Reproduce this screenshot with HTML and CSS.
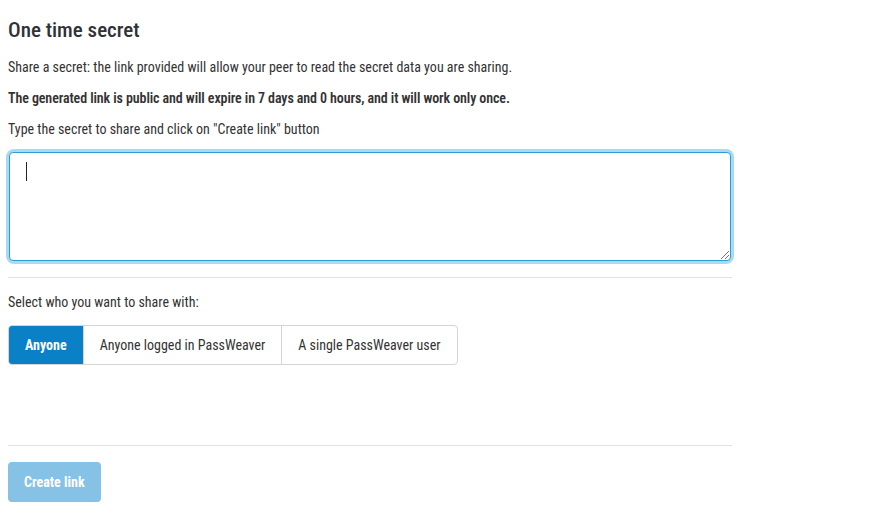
FILE: index.html
```html
<!DOCTYPE html>
<html>
<head>
<meta charset="utf-8">
<link rel="stylesheet" href="styles.css">
</head>
<body>
<main class="page">
  <h1 class="title">One time secret</h1>
  <p class="text">Share a secret: the link provided will allow your peer to read the secret data you are sharing.</p>
  <p class="text bold">The generated link is public and will expire in 7 days and 0 hours, and it will work only once.</p>
  <p class="text">Type the secret to share and click on "Create link" button</p>
  <div class="area-wrap"><div class="area"><span class="caret"></span><span class="grip"></span></div></div>
  <hr class="sep">
  <p class="text select">Select who you want to share with:</p>
  <div class="group">
    <span class="seg active">Anyone</span>
    <span class="seg">Anyone logged in PassWeaver</span>
    <span class="seg">A single PassWeaver user</span>
  </div>
  <hr class="sep sep2">
  <span class="create">Create link</span>
</main>
</body>
</html>
```
FILE: styles.css
```css
html, body { margin: 0; padding: 0; background: #fff; }
body { font-family: "Roboto Condensed", "Liberation Sans Narrow", Roboto, sans-serif; color: #333; }
.page { width: 724px; padding: 0 8px; }
.title { font-size: 21px; font-weight: 500; margin: 0; padding-top: 18px; line-height: 24px; color: #2f3338; }
.text { font-size: 14px; margin: 0; line-height: 31px; }
.title + .text { margin-top: 10px; }
.bold { font-weight: 600; letter-spacing: -0.1px; }
.area-wrap { margin-top: 7px; border-radius: 5px; box-shadow: 0 0 0 3px #a6dbf3; margin-left: 1px; margin-right: 1px; }
.area { height: 107px; border: 1px solid #2e9bd3; border-radius: 4px; position: relative; background: #fff; }
.caret { position: absolute; left: 16px; top: 9px; width: 1px; height: 19px; background: #222; }
.grip { position: absolute; right: 1px; bottom: 1px; width: 8px; height: 8px;
  background: linear-gradient(135deg, transparent 45%, #777 45%, #777 52%, transparent 52%, transparent 70%, #777 70%, #777 77%, transparent 77%); }
.sep { border: 0; border-top: 1px solid #e2e2e2; margin: 16px 0 0; }
.select { margin-top: 9px; }
.group { display: inline-flex; margin-top: 7px; border: 1px solid #d5d5d5; border-radius: 4px; overflow: hidden; }
.seg { font-size: 14px; height: 38px; line-height: 38px; padding: 0 16px; border-left: 1px solid #d5d5d5; color: #333; }
.seg:first-child { border-left: 0; }
.seg.active { background: #0a80c6; color: #fff; font-weight: 700; }
.sep2 { margin-top: 80px; }
.create { display: inline-block; margin-top: 16px; background: #85c2e5; color: #fff; font-weight: 700; font-size: 14px; height: 40px; line-height: 40px; padding: 0 16px; border-radius: 4px; }
```
